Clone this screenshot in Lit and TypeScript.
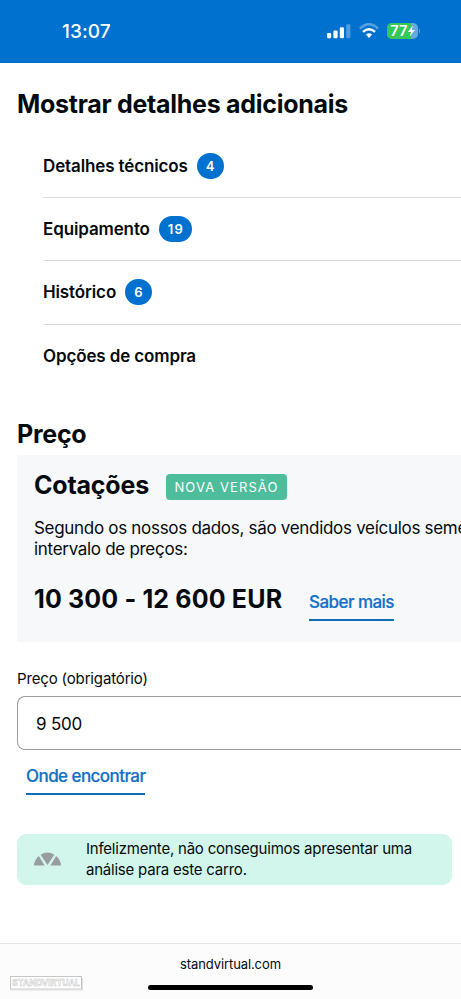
import { LitElement, html, css } from "lit";
import { customElement } from "lit/decorators.js";

interface Section {
  title: string;
  count?: number;
}

const SECTIONS: Section[] = [
  { title: "Detalhes técnicos", count: 4 },
  { title: "Equipamento", count: 19 },
  { title: "Histórico", count: 6 },
  { title: "Opções de compra" },
];

@customElement("status-bar")
class StatusBar extends LitElement {
  static styles = css`
    :host { display: flex; height: 63px; box-sizing: border-box; padding: 0 41px 0 62px; align-items: center; justify-content: space-between; background: #0071ce; color: #fff; }
    .time { font-size: 19px; font-weight: 500; letter-spacing: 0.1px; }
    .icons { display: flex; align-items: center; gap: 8px; margin-top: -1px; }
    svg { display: block; }
    .num { font: 600 14.5px Inter, sans-serif; fill: #fff; }
  `;
  render() {
    return html`
      <span class="time">13:07</span>
      <div class="icons">
        <svg width="24" height="16" viewBox="0 0 24 16" fill="#fff">
          <rect x="0" y="10" width="4.2" height="5.2" rx="1.2" />
          <rect x="6.4" y="7.6" width="4.2" height="7.6" rx="1.2" />
          <rect x="12.8" y="4.2" width="4.2" height="11" rx="1.2" />
          <rect x="19.2" y="1.2" width="4.2" height="14" rx="1.2" opacity=".3" />
        </svg>
        <svg width="20" height="16" viewBox="0 0 20 16" fill="none" stroke="#fff" stroke-width="2.4">
          <path d="M.9 5.5Q10-3 19.1 5.5" opacity=".35" />
          <path d="M4 8.9Q10 3.5 16 8.9" />
          <path d="M6.9 11.6Q10 9 13.1 11.6L10 15Z" fill="#fff" stroke="none" />
        </svg>
        <svg width="33" height="16" viewBox="0 0 33 16">
          <defs><clipPath id="cell"><rect width="31" height="16" rx="5" /></clipPath></defs>
          <g clip-path="url(#cell)">
            <rect width="31" height="16" fill="#66a9e2" />
            <rect width="24" height="16" fill="#34c759" />
          </g>
          <path d="M32 5.5q1 1 1 2.5t-1 2.5z" fill="#66a9e2" />
          <text class="num" x="3.3" y="13.2" textLength="17" lengthAdjust="spacingAndGlyphs">77</text>
          <path d="M26 2.5L20.8 9H24L22.7 13.5 28 7H24.8Z" fill="#fff" />
        </svg>
      </div>
    `;
  }
}

@customElement("section-row")
class SectionRow extends LitElement {
  static properties = { heading: {}, count: { type: Number } };
  declare heading: string;
  declare count?: number;
  static styles = css`
    :host { display: flex; align-items: center; gap: 9px; height: 63.2px; box-sizing: border-box; border-bottom: 1px solid #d8dbde; }
    :host(:last-child) { border-bottom: 0; }
    .name { font-size: 17px; font-weight: 600; letter-spacing: -0.13px; }
    .count { min-width: 27px; height: 26px; box-sizing: border-box; padding: 0 8px 0 9px; border-radius: 13px; background: #0071ce; color: #fff; font-size: 13px; line-height: 26px; font-weight: 600; letter-spacing: 1.3px; text-align: center; }
  `;
  render() {
    return html`<span class="name">${this.heading}</span>${this.count
      ? html`<span class="count">${this.count}</span>`
      : ""}`;
  }
}

@customElement("app-root")
class AppRoot extends LitElement {
  static styles = css`
    :host { display: flex; flex-direction: column; width: 100%; height: 999px; overflow: hidden; background: #fff; color: #050a0e; font-family: Inter, "Liberation Sans", sans-serif; }
    main { flex: 1; min-height: 0; padding-left: 17px; overflow: hidden; }
    h2 { margin: 0; font-size: 25px; line-height: 32px; font-weight: 700; white-space: nowrap; }
    .title { padding-top: 25px; letter-spacing: -0.28px; }
    .sections { margin: 15px 0 0 26px; }
    .price-title { margin-top: 30.2px; letter-spacing: -0.25px; }
    .panel { margin-top: 5px; height: 187px; box-sizing: border-box; padding: 14px 0 0 17px; background: #f6f8fa; overflow: hidden; }
    .panel-head { display: flex; align-items: center; gap: 17px; height: 32px; }
    .quotes { width: 115px; letter-spacing: -0.2px; }
    .tag { margin-top: 4px; width: 121px; height: 26px; border-radius: 4px; background: #4dbd9c; color: #fff; font-size: 13px; line-height: 26px; letter-spacing: 1.1px; text-align: center; white-space: nowrap; }
    .copy { margin: 17px 0 0; font-size: 17px; line-height: 21px; letter-spacing: -0.3px; white-space: nowrap; }
    .range { display: flex; align-items: flex-start; gap: 26px; margin-top: 23px; }
    .range h2 { width: 249px; letter-spacing: 0.16px; }
    .link { display: inline-block; height: 28px; box-sizing: border-box; border-bottom: 2px solid #0f6cb8; color: #1470c6; font-size: 17px; line-height: 18px; font-weight: 500; letter-spacing: -0.56px; -webkit-text-stroke: 0.2px #1470c6; white-space: nowrap; }
    .range .link { margin-top: 10px; }
    .label { margin-top: 28px; font-size: 15px; line-height: 18px; letter-spacing: -0.15px; }
    .field { margin-top: 8px; height: 54px; box-sizing: border-box; padding-left: 18px; border: 1px solid #999da0; border-right: 0; border-radius: 8px 0 0 8px; font-size: 17px; line-height: 54px; letter-spacing: -0.2px; }
    .find { margin: 17px 0 0 9px; }
    .notice { display: flex; align-items: center; margin-top: 39px; width: 435px; height: 51px; box-sizing: border-box; padding-left: 17px; border-radius: 9px; background: #d2f6eb; font-size: 15px; line-height: 21px; letter-spacing: -0.22px; white-space: nowrap; }
    .notice svg { margin-right: 25px; }
    footer { position: relative; display: flex; flex-direction: column; align-items: center; height: 56px; box-sizing: border-box; border-top: 1px solid #e2e3e5; background: #fcfcfd; }
    .host { margin-top: 11px; font-size: 13px; line-height: 18px; letter-spacing: -0.1px; }
    .home { margin-top: 12px; width: 165px; height: 5px; border-radius: 3px; background: #000; }
    .brand { position: absolute; left: 10px; top: 32px; overflow: visible; }
    .brand text { font: 700 9px Inter, sans-serif; fill: #fff; stroke: #c4c4c4; stroke-width: .5px; }
  `;
  render() {
    return html`
      <status-bar></status-bar>
      <main>
        <h2 class="title">Mostrar detalhes adicionais</h2>
        <div class="sections">
          ${SECTIONS.map((s) => html`<section-row .heading=${s.title} .count=${s.count}></section-row>`)}
        </div>
        <h2 class="price-title">Preço</h2>
        <section class="panel">
          <div class="panel-head">
            <h2 class="quotes">Cotações</h2>
            <span class="tag">NOVA VERSÃO</span>
          </div>
          <p class="copy">Segundo os nossos dados, são vendidos veículos semelhantes<br />intervalo de preços:</p>
          <div class="range">
            <h2>10 300 - 12 600 EUR</h2>
            <a class="link">Saber mais</a>
          </div>
        </section>
        <div class="label">Preço (obrigatório)</div>
        <div class="field">9 500</div>
        <a class="link find">Onde encontrar</a>
        <div class="notice">
          <svg width="27" height="14" viewBox="0 0 27 14" fill="#989e9f">
            <path d="M0 13.5Q.4 7.7 4.8 4L10.7 13.5Z" />
            <path d="M6.6 2.8Q13.5-1.7 20.4 2.8L13.5 13Z" />
            <path d="M27 13.5Q26.6 7.7 22.2 4L16.3 13.5Z" />
          </svg>
          <span>Infelizmente, não conseguimos apresentar uma<br />análise para este carro.</span>
        </div>
      </main>
      <footer>
        <span class="host">standvirtual.com</span>
        <div class="home"></div>
        <svg class="brand" width="73" height="15" viewBox="0 0 73 15">
          <rect x=".5" y=".5" width="71" height="12.5" fill="#fff" stroke="#c6c6c6" />
          <path d="M1 14H72.5V2" fill="none" stroke="#dedede" />
          <text x="2" y="10" textLength="68" lengthAdjust="spacingAndGlyphs">STANDVIRTUAL</text>
        </svg>
      </footer>
    `;
  }
}
